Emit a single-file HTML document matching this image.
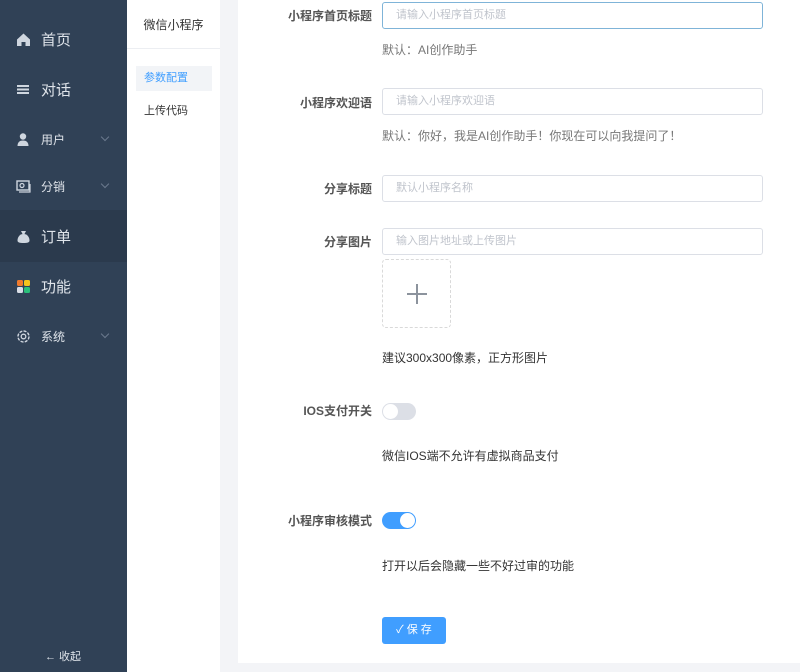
<!DOCTYPE html>
<html><head><meta charset="utf-8"><style>
*{margin:0;padding:0;box-sizing:border-box}
body{width:800px;height:672px;overflow:hidden;background:#f3f4f7;font-family:"Liberation Sans","Noto Sans CJK SC",sans-serif;position:relative}
.sb{position:absolute;left:0;top:0;width:127px;height:672px;background:#304156}
.it{position:absolute;left:0;width:127px;color:#dfe4ea;display:flex;align-items:center}
.it .ic{position:absolute;left:16px;width:15px;height:15px}
.it .tx{position:absolute;left:41px}
.big{font-size:15px}.sm{font-size:12px}
.chev{position:absolute;left:102px;width:6px;height:6px;border-right:1px solid #6b7a8d;border-bottom:1px solid #6b7a8d;transform:rotate(45deg)}
.p2{position:absolute;left:127px;top:0;width:93px;height:672px;background:#fff}
.card{position:absolute;left:238px;top:0;width:562px;height:663px;background:#fff}
.lab{position:absolute;right:428px;font-size:12px;font-weight:bold;color:#555;text-align:right;white-space:nowrap}
.inp{position:absolute;left:382px;width:381px;height:27px;border:1px solid #dcdfe6;border-radius:3px;font-size:11px;color:#c0c4cc;padding-left:13px;line-height:25px}
.hint{position:absolute;left:382px;font-size:12px;color:#777;white-space:nowrap}
.dk{color:#333}
</style></head><body>
<div class="sb">
 <div class="it big" style="top:29px;height:20px"><svg class="ic" viewBox="0 0 15 15"><path d="M1 7.5L7.5 1.5 14 7.5V14H9.5V10h-4v4H1z" fill="#cfd6df"/></svg><span class="tx">首页</span></div>
 <div class="it big" style="top:79px;height:20px"><svg class="ic" viewBox="0 0 15 15"><rect x="1" y="3" width="12" height="2" fill="#cfd6df"/><rect x="1" y="6.5" width="12" height="2" fill="#cfd6df"/><rect x="1" y="10" width="12" height="2" fill="#cfd6df"/></svg><span class="tx">对话</span></div>
 <div class="it sm" style="top:130px;height:18px"><svg class="ic" viewBox="0 0 15 15"><circle cx="7" cy="4.5" r="3.2" fill="#cfd6df"/><path d="M1.5 14c0-4 2.5-5.5 5.5-5.5s5.5 1.5 5.5 5.5z" fill="#cfd6df"/></svg><span class="tx">用户</span><span class="chev" style="top:4px"></span></div>
 <div class="it sm" style="top:177px;height:18px"><svg class="ic" viewBox="0 0 15 15"><rect x="1" y="2" width="12" height="9" fill="none" stroke="#cfd6df" stroke-width="1.4"/><circle cx="6" cy="6.5" r="2" fill="none" stroke="#cfd6df" stroke-width="1.2"/><path d="M3 13h11V5" fill="none" stroke="#cfd6df" stroke-width="1.2"/></svg><span class="tx">分销</span><span class="chev" style="top:4px"></span></div>
 <div class="it big" style="top:210px;height:52px;background:#2b3a4d"><svg class="ic" viewBox="0 0 15 15"><path d="M5 2h5l-1.5 3h-2z" fill="#cfd6df"/><path d="M7.5 5C3 5 1.5 9 1.5 11.5 1.5 13.5 3.5 14 7.5 14s6-.5 6-2.5C13.5 9 12 5 7.5 5z" fill="#cfd6df"/></svg><span class="tx">订单</span></div>
 <div class="it big" style="top:276px;height:20px"><svg class="ic" viewBox="0 0 15 15"><rect x="1" y="1" width="6" height="6" rx="1.5" fill="#f07a2c"/><rect x="8" y="1" width="6" height="6" rx="1.5" fill="#f5c31c"/><rect x="1" y="8" width="6" height="6" rx="1.5" fill="#d9dde6"/><rect x="8" y="8" width="6" height="6" rx="1.5" fill="#2bbf7a"/></svg><span class="tx">功能</span></div>
 <div class="it sm" style="top:327px;height:18px"><svg class="ic" viewBox="0 0 15 15"><circle cx="7.5" cy="7.5" r="5.5" fill="none" stroke="#cfd6df" stroke-width="1.4" stroke-dasharray="3 1.3"/><circle cx="7.5" cy="7.5" r="2.3" fill="none" stroke="#cfd6df" stroke-width="1.3"/></svg><span class="tx">系统</span><span class="chev" style="top:4px"></span></div>
 <div style="position:absolute;left:45px;top:648px;font-size:11px;color:#dfe4ea">← 收起</div>
</div>
<div class="p2">
 <div style="position:absolute;left:0;top:16px;width:93px;text-align:center;font-size:12px;color:#333">微信小程序</div>
 <div style="position:absolute;left:0;top:48px;width:93px;height:1px;background:#eceef2"></div>
 <div style="position:absolute;left:9px;top:66px;width:76px;height:25px;background:#f2f4f7;font-size:11px;color:#409eff;padding-left:8px;line-height:25px">参数配置</div>
 <div style="position:absolute;left:17px;top:102px;font-size:11px;color:#333">上传代码</div>
</div>
<div class="card"></div>
<div class="lab" style="top:7px">小程序首页标题</div>
<div class="inp" style="top:2px;border-color:#7fb4d8">请输入小程序首页标题</div>
<div class="hint" style="top:41px">默认：AI创作助手</div>
<div class="lab" style="top:94px">小程序欢迎语</div>
<div class="inp" style="top:88px">请输入小程序欢迎语</div>
<div class="hint" style="top:127px">默认：你好，我是AI创作助手！你现在可以向我提问了！</div>
<div class="lab" style="top:180px">分享标题</div>
<div class="inp" style="top:175px">默认小程序名称</div>
<div class="lab" style="top:233px">分享图片</div>
<div class="inp" style="top:228px">输入图片地址或上传图片</div>
<div style="position:absolute;left:382px;top:259px;width:69px;height:69px;border:1px dashed #d9d9d9;border-radius:4px"><div style="position:absolute;left:24px;top:33px;width:20px;height:1.5px;background:#8c939d"></div><div style="position:absolute;left:33px;top:24px;width:1.5px;height:20px;background:#8c939d"></div></div>
<div class="hint dk" style="top:349px">建议300x300像素，正方形图片</div>
<div class="lab" style="top:402px">IOS支付开关</div>
<div style="position:absolute;left:382px;top:403px;width:34px;height:17px;border-radius:9px;background:#dcdfe6"><div style="position:absolute;left:1px;top:1px;width:15px;height:15px;border-radius:50%;background:#fff"></div></div>
<div class="hint dk" style="top:447px">微信IOS端不允许有虚拟商品支付</div>
<div class="lab" style="top:512px">小程序审核模式</div>
<div style="position:absolute;left:382px;top:512px;width:34px;height:17px;border-radius:9px;background:#409eff"><div style="position:absolute;left:18px;top:1px;width:15px;height:15px;border-radius:50%;background:#fff"></div></div>
<div class="hint dk" style="top:557px">打开以后会隐藏一些不好过审的功能</div>
<div style="position:absolute;left:382px;top:617px;width:64px;height:27px;background:#409eff;border-radius:3px;color:#fff;font-size:11px;text-align:center;line-height:27px">✓ 保 存</div>
</body></html>
